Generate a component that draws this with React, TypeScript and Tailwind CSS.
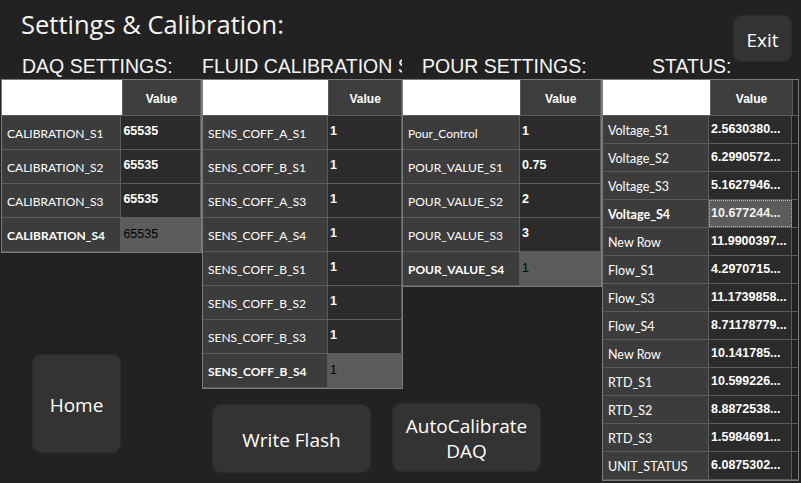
import React from "react";

type Row = { name: string; value: string; selected?: boolean };

const daq: Row[] = [
  { name: "CALIBRATION_S1", value: "65535" },
  { name: "CALIBRATION_S2", value: "65535" },
  { name: "CALIBRATION_S3", value: "65535" },
  { name: "CALIBRATION_S4", value: "65535", selected: true },
];

const fluid: Row[] = [
  { name: "SENS_COFF_A_S1", value: "1" },
  { name: "SENS_COFF_B_S1", value: "1" },
  { name: "SENS_COFF_A_S3", value: "1" },
  { name: "SENS_COFF_A_S4", value: "1" },
  { name: "SENS_COFF_B_S1", value: "1" },
  { name: "SENS_COFF_B_S2", value: "1" },
  { name: "SENS_COFF_B_S3", value: "1" },
  { name: "SENS_COFF_B_S4", value: "1", selected: true },
];

const pour: Row[] = [
  { name: "Pour_Control", value: "1" },
  { name: "POUR_VALUE_S1", value: "0.75" },
  { name: "POUR_VALUE_S2", value: "2" },
  { name: "POUR_VALUE_S3", value: "3" },
  { name: "POUR_VALUE_S4", value: "1", selected: true },
];

const status: Row[] = [
  { name: "Voltage_S1", value: "2.5630380..." },
  { name: "Voltage_S2", value: "6.2990572..." },
  { name: "Voltage_S3", value: "5.1627946..." },
  { name: "Voltage_S4", value: "10.677244...", selected: true },
  { name: "New Row", value: "11.9900397..." },
  { name: "Flow_S1", value: "4.2970715..." },
  { name: "Flow_S3", value: "11.1739858..." },
  { name: "Flow_S4", value: "8.71178779..." },
  { name: "New Row", value: "10.141785..." },
  { name: "RTD_S1", value: "10.599226..." },
  { name: "RTD_S2", value: "8.8872538..." },
  { name: "RTD_S3", value: "1.5984691..." },
  { name: "UNIT_STATUS", value: "6.0875302..." },
];

const labelFont = { fontFamily: "Lato, 'Open Sans', sans-serif" };
const valueFont = { fontFamily: "'Liberation Sans', Arial, sans-serif" };

function Grid({
  rows,
  nameW,
  valueW,
  rowH,
  width,
  focusStyle,
}: {
  rows: Row[];
  nameW: number;
  valueW: number;
  rowH: number;
  width: number;
  focusStyle?: boolean;
}) {
  return (
    <div
      className="border border-[#7a7a7a] bg-[#222222] flex flex-col"
      style={{ width }}
    >
      <div className="flex h-[36px] border-b border-[#5c5c5c]">
        <div className="bg-white" style={{ width: nameW }} />
        <div
          className="bg-[#3d3d3d] border-l border-r border-[#5c5c5c] flex items-center justify-center text-[12px] font-bold text-white pt-[2px]"
          style={{ width: valueW, ...valueFont }}
        >
          Value
        </div>
      </div>
      {rows.map((r, i) => (
        <div key={i} className="flex border-b border-[#5c5c5c]" style={{ height: rowH }}>
          <div
            className={`bg-[#3c3c3c] border-r border-[#5c5c5c] flex items-center pl-[5px] pt-[3px] text-white whitespace-nowrap overflow-hidden ${
              r.selected ? "font-bold" : ""
            } ${focusStyle ? "text-[12.5px]" : "text-[12px]"}`}
            style={{ width: nameW - 1, ...labelFont }}
          >
            {r.name}
          </div>
          <div
            className={`border-r border-[#5c5c5c] flex items-start pl-[2px] whitespace-nowrap overflow-hidden text-[12.5px] ${
              r.selected
                ? focusStyle
                  ? "bg-[#5c5c5c] text-[#f2f2f2] font-bold outline-1 outline-dotted outline-[#bbbbbb] -outline-offset-1 pt-[4px]"
                  : "bg-[#5c5c5c] text-black pt-[7px]"
                : focusStyle
                ? "bg-[#2b2b2b] text-white font-bold pt-[4px]"
                : "bg-[#2b2b2b] text-white font-bold pt-[6px]"
            }`}
            style={{ width: valueW, ...valueFont }}
          >
            {r.value}
          </div>
        </div>
      ))}
    </div>
  );
}

function Btn({ children, className }: { children: React.ReactNode; className: string }) {
  return (
    <div
      className={`bg-[#333333] border border-[#2c2c2c] rounded-[9px] flex items-center justify-center text-center text-white leading-[25px] pt-[3px] ${className}`}
      style={{ fontFamily: "'Open Sans', sans-serif" }}
    >
      {children}
    </div>
  );
}

export default function App() {
  const head = { fontFamily: "'Liberation Sans', Arial, sans-serif" };
  return (
    <div className="w-[801px] h-[483px] bg-[#222222] overflow-hidden flex flex-col text-white">
      <div className="flex h-[79px]">
        <div className="flex flex-col">
          <div
            className="pl-[21px] pt-[7px] h-[55px] text-[25.5px] leading-[34px] text-[#f4f4f4]"
            style={{ fontFamily: "'Open Sans', sans-serif" }}
          >
            Settings &amp; Calibration:
          </div>
          <div className="flex text-[19.5px] leading-[22px] text-[#f4f4f4]" style={head}>
            <div className="w-[202px] pl-[22px] whitespace-nowrap">DAQ SETTINGS:</div>
            <div className="w-[200px] whitespace-nowrap overflow-hidden">FLUID CALIBRATION S</div>
            <div className="w-[200px] pl-[20px] whitespace-nowrap">POUR SETTINGS:</div>
            <div className="w-[130px] pl-[50px] whitespace-nowrap">STATUS:</div>
          </div>
        </div>
        <Btn className="mt-[15px] ml-[1px] w-[59px] h-[47px] text-[19px]">Exit</Btn>
      </div>
      <div className="flex items-start pl-[1px]">
        <div className="w-[201px] flex flex-col">
          <Grid rows={daq} nameW={121} valueW={80} rowH={34} width={201} />
          <Btn className="ml-[31px] mt-[101px] w-[89px] h-[99px] text-[19px]">Home</Btn>
        </div>
        <div className="w-[200px] flex flex-col">
          <Grid rows={fluid} nameW={126} valueW={74} rowH={34} width={201} />
          <Btn className="ml-[10px] mt-[15px] w-[159px] h-[69px] text-[19px]">Write Flash</Btn>
        </div>
        <div className="w-[200px] flex flex-col">
          <Grid rows={pour} nameW={118} valueW={81} rowH={34} width={200} />
          <Btn className="-ml-[10px] mt-[116px] w-[149px] h-[69px] text-[19px]">
            AutoCalibrate
            <br />
            DAQ
          </Btn>
        </div>
        <div className="w-[197px] flex flex-col">
          <Grid rows={status} nameW={107} valueW={83} rowH={28} width={197} focusStyle />
        </div>
      </div>
    </div>
  );
}
